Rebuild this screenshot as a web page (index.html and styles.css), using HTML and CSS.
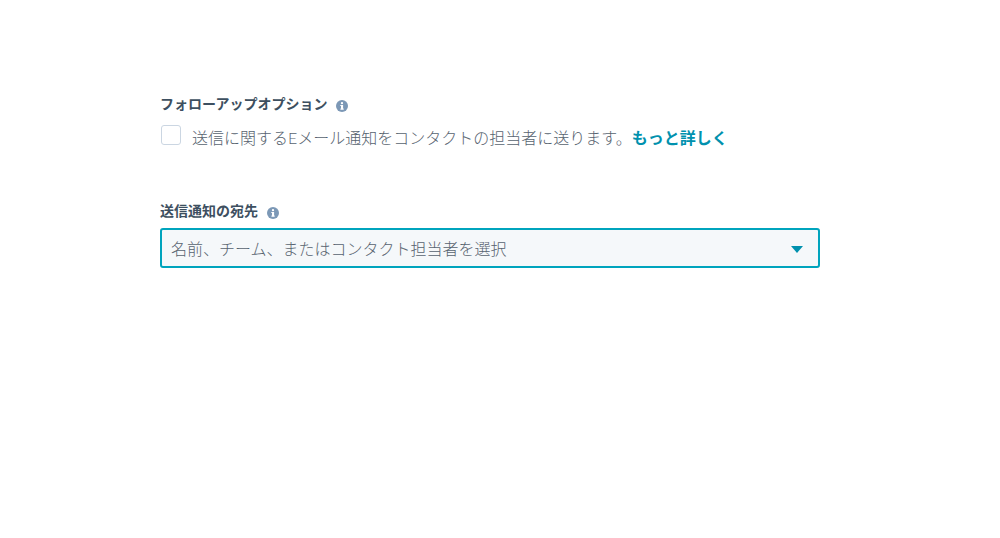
FILE: index.html
```html
<!DOCTYPE html>
<html lang="ja">
<head>
<meta charset="utf-8">
<title>フォローアップオプション</title>
<link rel="stylesheet" href="styles.css">
</head>
<body>
<main class="form">
  <section class="group-follow">
    <div class="label">
      <span>フォローアップオプション</span>
      <svg class="info" viewBox="0 0 12 12"><circle cx="6" cy="6" r="6" fill="#7c98b6"/><rect x="5" y="5" width="2.1" height="4.4" fill="#fff"/><rect x="4.3" y="5" width="2" height="1" fill="#fff"/><rect x="4.3" y="8.6" width="3.5" height="1" fill="#fff"/><circle cx="6" cy="3.2" r="1.15" fill="#fff"/></svg>
    </div>
    <div class="check-row">
      <span class="checkbox"></span>
      <span class="check-text">送信に関するEメール通知をコンタクトの担当者に送ります。<a class="more" href="#">もっと詳しく</a></span>
    </div>
  </section>
  <section class="group-notify">
    <div class="label">
      <span>送信通知の宛先</span>
      <svg class="info" viewBox="0 0 12 12"><circle cx="6" cy="6" r="6" fill="#7c98b6"/><rect x="5" y="5" width="2.1" height="4.4" fill="#fff"/><rect x="4.3" y="5" width="2" height="1" fill="#fff"/><rect x="4.3" y="8.6" width="3.5" height="1" fill="#fff"/><circle cx="6" cy="3.2" r="1.15" fill="#fff"/></svg>
    </div>
    <div class="select">
      <span class="placeholder">名前、チーム、またはコンタクト担当者を選択</span>
      <span class="caret"></span>
    </div>
  </section>
</main>
</body>
</html>
```
FILE: styles.css
```css
html, body {
  margin: 0;
  padding: 0;
  background: #fff;
}
body {
  font-family: "Lato", "Noto Sans CJK JP", sans-serif;
  color: #3d4f60;
}
.form {
  width: 660px;
  margin-left: 160px;
  padding-top: 94px;
}
.label {
  display: flex;
  align-items: center;
  gap: 9px;
  height: 20px;
  font-size: 14px;
  font-weight: 700;
  line-height: 20px;
}
.info {
  width: 12px;
  height: 12px;
  flex: none;
  margin-top: 3px;
}
.check-row {
  display: flex;
  align-items: flex-start;
  gap: 11px;
  margin-top: 11px;
  padding-left: 1px;
}
.checkbox {
  box-sizing: border-box;
  width: 20px;
  height: 20px;
  flex: none;
  background: #fff;
  border: 1px solid #cbd6e2;
  border-radius: 3px;
}
.check-text {
  font-size: 16px;
  font-weight: 300;
  line-height: 24px;
  margin-top: 1px;
  color: #57636f;
}
.more {
  color: #0091ae;
  font-weight: 700;
  text-decoration: none;
}
.group-notify {
  margin-top: 51px;
}
.select {
  box-sizing: border-box;
  display: flex;
  align-items: center;
  justify-content: space-between;
  height: 40px;
  margin-top: 7px;
  padding: 0 15px 0 9px;
  background: #f5f8fa;
  border: 2px solid #00a4bd;
  border-radius: 3px;
}
.placeholder {
  font-size: 16px;
  font-weight: 300;
  color: #57636f;
}
.caret {
  width: 0;
  height: 0;
  border-left: 6.5px solid transparent;
  border-right: 6.5px solid transparent;
  border-top: 7px solid #0091ae;
  margin-top: 2px;
}
```
